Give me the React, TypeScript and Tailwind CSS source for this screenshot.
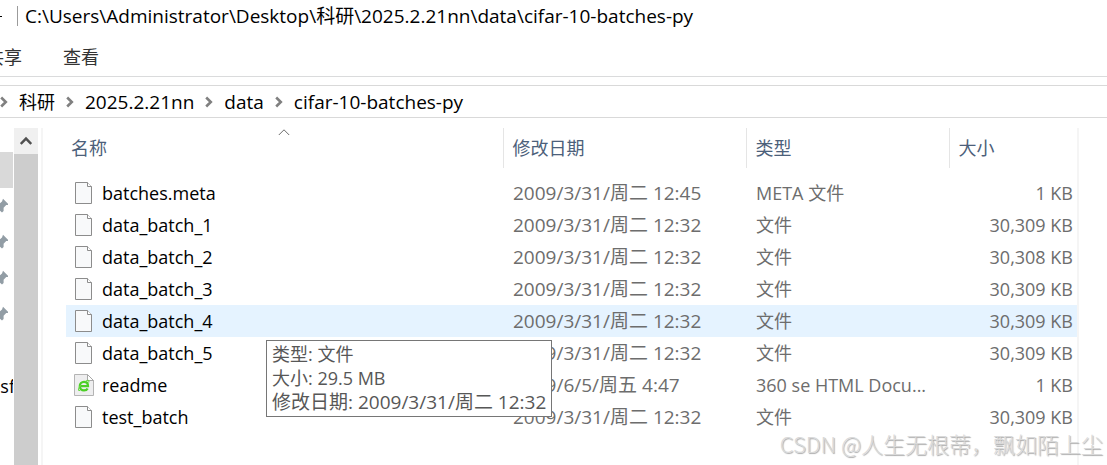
type FileKind = 'file' | 'html';

interface FileRow {
  name: string;
  kind: FileKind;
  modified: string;
  type: string;
  size: string;
}

const FILES: FileRow[] = [
  { name: 'batches.meta', kind: 'file', modified: '2009/3/31/周二 12:45', type: 'META 文件', size: '1 KB' },
  { name: 'data_batch_1', kind: 'file', modified: '2009/3/31/周二 12:32', type: '文件', size: '30,309 KB' },
  { name: 'data_batch_2', kind: 'file', modified: '2009/3/31/周二 12:32', type: '文件', size: '30,308 KB' },
  { name: 'data_batch_3', kind: 'file', modified: '2009/3/31/周二 12:32', type: '文件', size: '30,309 KB' },
  { name: 'data_batch_4', kind: 'file', modified: '2009/3/31/周二 12:32', type: '文件', size: '30,309 KB' },
  { name: 'data_batch_5', kind: 'file', modified: '2009/3/31/周二 12:32', type: '文件', size: '30,309 KB' },
  { name: 'readme', kind: 'html', modified: '2009/6/5/周五 4:47', type: '360 se HTML Docu...', size: '1 KB' },
  { name: 'test_batch', kind: 'file', modified: '2009/3/31/周二 12:32', type: '文件', size: '30,309 KB' },
];

const CRUMBS = ['科研', '2025.2.21nn', 'data', 'cifar-10-batches-py'];
const HOVERED = 'data_batch_4';

function Chevron() {
  return (
    <svg className="w-2 h-3 shrink-0" viewBox="0 0 8 12" fill="none" stroke="#808080" strokeWidth="2.6">
      <path d="M1.2 1.5 5.8 6 1.2 10.5" />
    </svg>
  );
}

function Pin() {
  return (
    <svg className="w-4 h-4 shrink-0" viewBox="0 0 16 16" fill="#929da5">
      <path d="M11 .8 16 5.8V7H14.2L11.6 9.8V13L10 14.6 6.4 11.2 2 15 5.2 10 2.6 7 3.4 6H7L10 3.4Z" />
    </svg>
  );
}

function FileIcon({ kind }: { kind: FileKind }) {
  if (kind === 'html') {
    return (
      <svg className="w-5 h-6 shrink-0" viewBox="0 0 20 24">
        <path d="M.5 1.5h13l6 6v15H.5Z" fill="#eeeeef" stroke="#b4b4b4" />
        <path d="M13.5 1.5v6h6Z" fill="#fff" stroke="#a8a8a8" />
        <path d="M5.8 13.2H14C14 10.6 12.3 8.9 10 8.9S5.8 10.8 5.8 13.2 7.5 17.4 10 17.4c1.7 0 3-.7 3.6-2" fill="none" stroke="#4bcf25" strokeWidth="2.3" />
        <path d="M6.2 17.3c-2.5 1.2-2.2-2.2.7-5.1M11.5 8.6c2.5-1.8 4.2-1.6 3.1 1" fill="none" stroke="#68d943" strokeWidth="1.1" />
      </svg>
    );
  }
  return (
    <svg className="w-5 h-6 shrink-0" viewBox="0 0 20 24">
      <path d="M1.5 1.5h12l4 4v17h-16Z" fill="#f8f9fa" stroke="#8c8c8c" />
      <path d="M13.5 1.5v4h4" fill="#fff" stroke="#8c8c8c" />
    </svg>
  );
}

function TitleBar() {
  return (
    <header className="flex items-center h-8 overflow-hidden">
      <span className="w-0.5 h-px bg-black" />
      <span className="ml-[15px] mr-[7px] w-px h-5 bg-[#9b9b9b]" />
      <h1 className="text-[19px] whitespace-nowrap">C:\Users\Administrator\Desktop\科研\2025.2.21nn\data\cifar-10-batches-py</h1>
    </header>
  );
}

function Ribbon() {
  return (
    <nav className="flex items-center gap-[41px] h-[45px] pt-1.5 -ml-3.5 border-b border-[#dadbdc] overflow-hidden text-[#333]">
      <button type="button">共享</button>
      <button type="button">查看</button>
    </nav>
  );
}

function AddressBar() {
  return (
    <nav aria-label="地址" className="flex items-center gap-[11px] h-[33px] mt-2 border-y border-[#d9d9d9] whitespace-nowrap">
      {CRUMBS.map((crumb, i) => (
        <div key={crumb} className="flex items-center gap-[11px]">
          <Chevron />
          <button type="button" className={i === 0 ? '' : 'text-[19px]'}>{crumb}</button>
        </div>
      ))}
    </nav>
  );
}

function Sidebar() {
  return (
    <aside className="flex shrink-0">
      <ul className="w-[13px] pt-6 overflow-hidden">
        <li className="h-9 bg-[#d9d9d9]" />
        {[0, 1, 2, 3].map((i) => (
          <li key={i} className="flex items-center justify-end h-9 pr-[5px]">
            <Pin />
          </li>
        ))}
        <li className="h-9" />
        <li className="flex items-center justify-end h-9 -mr-0.5">nsf</li>
      </ul>
      <div className="flex flex-col w-6 ml-px bg-[#cdcdcd]">
        <button type="button" aria-label="向上滚动" className="flex items-center justify-center h-[26px] bg-[#f0f0f0]">
          <svg className="w-3 h-3" viewBox="0 0 12 12" fill="none" stroke="#505050" strokeWidth="2.4">
            <path d="M.8 9 6 3.6 11.2 9" />
          </svg>
        </button>
      </div>
      <div className="w-0.5 ml-[3px] bg-[#f5f5f5]" />
    </aside>
  );
}

function Tooltip() {
  return (
    <div
      role="tooltip"
      className="absolute z-10 left-[200px] top-[35px] px-[5px] pt-px pb-0.5 border border-[#767676] bg-white text-[#575757] leading-6 whitespace-nowrap"
    >
      <p>类型: 文件</p>
      <p>大小: 29.5 MB</p>
      <p className="text-[19px]">修改日期: 2009/3/31/周二 12:32</p>
    </div>
  );
}

function FileTable() {
  return (
    <table className="w-full table-fixed text-left text-[#6d6d6d] whitespace-nowrap">
      <colgroup>
        <col />
        <col className="w-[243px]" />
        <col className="w-[203px]" />
        <col className="w-32" />
      </colgroup>
      <thead className="text-[#4c607a]">
        <tr className="h-10">
          <th className="relative pl-[5px] font-normal">
            名称
            <svg className="absolute left-1/2 top-0 -translate-x-1/2 w-3 h-2" viewBox="0 0 12 8" fill="none" stroke="#6b6b6b">
              <path d="M.8 7 6 1.8 11.2 7" />
            </svg>
          </th>
          <th className="border-l border-[#e5e5e5] pl-[9px] font-normal">修改日期</th>
          <th className="border-l border-[#e5e5e5] pl-[9px] font-normal">类型</th>
          <th className="border-l border-[#e5e5e5] pl-[9px] font-normal">大小</th>
        </tr>
        <tr aria-hidden="true" className="h-[9px]" />
      </thead>
      <tbody>
        {FILES.map((file) => (
          <tr key={file.name} className={file.name === HOVERED ? 'h-8 bg-[#e5f3ff]' : 'h-8'}>
            <td className="relative p-0 text-black">
              <div className="flex items-center gap-2 pl-2">
                <FileIcon kind={file.kind} />
                <span>{file.name}</span>
              </div>
              {file.name === HOVERED && <Tooltip />}
            </td>
            <td className="py-0 pl-2.5 text-[19px]">{file.modified}</td>
            <td className="py-0 pl-2.5">{file.type}</td>
            <td className="py-0 pr-1 text-right">{file.size}</td>
          </tr>
        ))}
      </tbody>
    </table>
  );
}

export default function App() {
  return (
    <div className="relative flex flex-col min-h-screen overflow-hidden bg-white text-black text-[18px] leading-6 font-['Open_Sans','Noto_Sans_CJK_SC',sans-serif]">
      <TitleBar />
      <Ribbon />
      <AddressBar />
      <main className="flex flex-1 mt-2.5">
        <Sidebar />
        <section className="flex-1 min-w-0 pl-[23px] mr-7 border-r-2 border-[#f5f5f5]">
          <FileTable />
        </section>
      </main>
      <p className="absolute right-1 bottom-1.5 text-[22px] leading-8 text-[#dadada] font-['Noto_Sans_CJK_SC',sans-serif] font-light [text-shadow:1px_1px_1px_#aaa]">
        CSDN @人生无根蒂，飘如陌上尘
      </p>
    </div>
  );
}
